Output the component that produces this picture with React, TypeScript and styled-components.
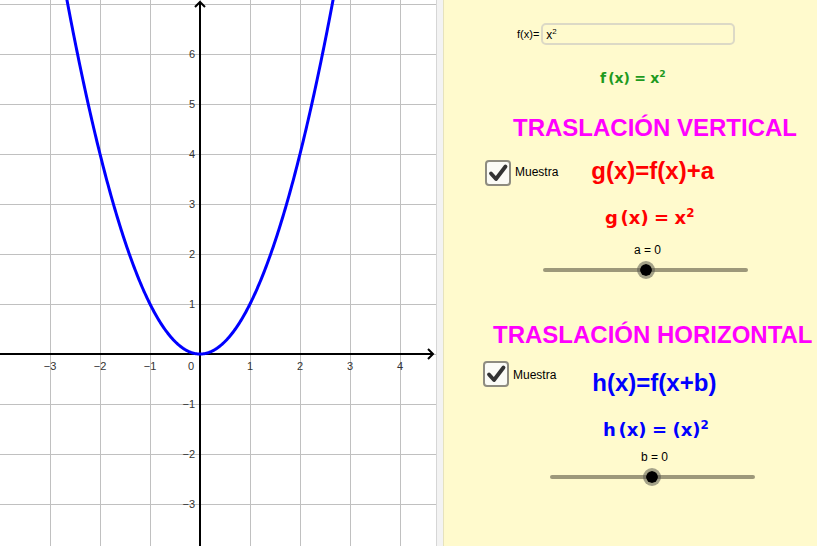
import React from 'react';
import styled, { createGlobalStyle } from 'styled-components';

const GlobalStyle = createGlobalStyle`
  html, body {
    margin: 0;
    padding: 0;
    background: #ffffff;
  }
  body {
    font-family: 'Liberation Sans', Arial, sans-serif;
  }
`;

// graph geometry
const ORIGIN_X = 200;
const ORIGIN_Y = 354;
const UNIT = 50;
const GRAPH_W = 436;
const GRAPH_H = 546;

const Page = styled.div`
  display: flex;
  width: 817px;
  height: 546px;
  overflow: hidden;
`;

const GraphPane = styled.div`
  width: ${GRAPH_W}px;
  height: ${GRAPH_H}px;
  flex-shrink: 0;
  background: #ffffff;
`;

const Divider = styled.div`
  width: 6px;
  flex-shrink: 0;
  background: #f3f3f3;
  border-left: 1px solid #d6d6d6;
`;

const Panel = styled.div`
  flex: 1;
  display: flex;
  flex-direction: column;
  background: #fffacd;
  border-left: 1px solid #e6e2bd;
`;

const Row = styled.div<{ $top: number; $h: number; $left: number }>`
  display: flex;
  align-items: center;
  margin-top: ${(p) => p.$top}px;
  height: ${(p) => p.$h}px;
  padding-left: ${(p) => p.$left}px;
`;

const CheckRow = styled.div<{ $top: number; $left: number }>`
  display: flex;
  align-items: flex-start;
  margin-top: ${(p) => p.$top}px;
  height: 26px;
  padding-left: ${(p) => p.$left}px;
`;

const InputLabel = styled.span`
  font-size: 11px;
  color: #000;
  margin-right: 2px;
`;

const InputBox = styled.div`
  box-sizing: border-box;
  width: 194px;
  height: 22px;
  border: 2px solid #dcd9c6;
  border-radius: 5px;
  padding: 2px 0 0 3px;
  font-size: 12px;
  line-height: 16px;
  color: #000;
`;

const Title = styled.h2`
  margin: 0;
  font-family: 'Liberation Sans', Arial, sans-serif;
  font-weight: bold;
  font-size: 24px;
  line-height: 30px;
  color: #ff00ff;
  white-space: nowrap;
`;

const Box = styled.div`
  box-sizing: border-box;
  width: 26px;
  height: 26px;
  border: 2px solid #8e8c80;
  border-radius: 4px;
  background: #fbfbf6;
  display: flex;
  align-items: center;
  justify-content: center;
  flex-shrink: 0;
`;

const CheckLabel = styled.span<{ $dy: number }>`
  font-size: 12px;
  line-height: 14px;
  color: #000;
  margin-left: 4px;
  margin-top: ${(p) => p.$dy}px;
`;

const BigFormula = styled.span<{ $color: string; $dy: number; $gap: number }>`
  font-family: 'Liberation Sans', Arial, sans-serif;
  font-weight: bold;
  font-size: 24px;
  line-height: 28px;
  color: ${(p) => p.$color};
  margin-left: ${(p) => p.$gap}px;
  margin-top: ${(p) => p.$dy}px;
  white-space: nowrap;
`;

const MathText = styled.span<{ $color: string; $size: number }>`
  font-family: 'DejaVu Sans', sans-serif;
  font-weight: bold;
  font-size: ${(p) => p.$size}px;
  line-height: 1;
  color: ${(p) => p.$color};
  white-space: nowrap;
  display: inline-block;
`;

const Sp = styled.span<{ $w: number }>`
  display: inline-block;
  width: ${(p) => p.$w}em;
`;

const Sup = styled.sup`
  font-size: 0.66em;
  line-height: 0;
  vertical-align: baseline;
  position: relative;
  top: -0.6em;
`;

const SliderLabel = styled.span`
  font-size: 12px;
  color: #000;
`;

const Track = styled.div<{ $w: number }>`
  position: relative;
  width: ${(p) => p.$w}px;
  height: 4px;
  border-radius: 2px;
  background: #9d987a;
`;

const Knob = styled.div`
  position: absolute;
  top: 50%;
  width: 12px;
  height: 12px;
  margin: -9px 0 0 -9px;
  border-radius: 50%;
  background: #000;
  border: 3px solid rgba(90, 90, 80, 0.55);
  background-clip: padding-box;
`;

const CheckMark = () => (
  <svg width="22" height="22" viewBox="0 0 22 22">
    <path
      d="M4 11.5 L9 17 L18.5 4.5"
      fill="none"
      stroke="#333"
      strokeWidth="3.8"
      strokeLinecap="round"
      strokeLinejoin="round"
    />
  </svg>
);

const Slider = ({ width, pos }: { width: number; pos: number }) => (
  <Track $w={width}>
    <Knob style={{ left: `${pos}px` }} />
  </Track>
);

const Graph = () => {
  const vLines: number[] = [];
  for (let x = 50; x <= 400; x += UNIT) vLines.push(x);
  const hLines: number[] = [];
  for (let y = 4; y < GRAPH_H; y += UNIT) hLines.push(y);

  const pts: string[] = [];
  for (let i = -2.7; i <= 2.7001; i += 0.02) {
    const X = ORIGIN_X + UNIT * i;
    const Y = ORIGIN_Y - UNIT * i * i;
    pts.push(`${X.toFixed(2)},${Y.toFixed(2)}`);
  }

  const xLabels = [-3, -2, -1, 1, 2, 3, 4];
  const yLabels = [-3, -2, -1, 1, 2, 3, 4, 5, 6];

  return (
    <svg width={GRAPH_W} height={GRAPH_H} viewBox={`0 0 ${GRAPH_W} ${GRAPH_H}`}>
      <g stroke="#c0c0c0" strokeWidth="1">
        {vLines.map((x) => (
          <line key={`v${x}`} x1={x + 0.5} y1={0} x2={x + 0.5} y2={GRAPH_H} />
        ))}
        {hLines.map((y) => (
          <line key={`h${y}`} x1={0} y1={y + 0.5} x2={GRAPH_W} y2={y + 0.5} />
        ))}
      </g>
      {/* axes */}
      <g stroke="#000" strokeWidth="2" fill="none">
        <line x1={0} y1={ORIGIN_Y} x2={433} y2={ORIGIN_Y} />
        <polyline points={`428,${ORIGIN_Y - 5} 433,${ORIGIN_Y} 428,${ORIGIN_Y + 5}`} />
        <line x1={ORIGIN_X} y1={GRAPH_H} x2={ORIGIN_X} y2={2} />
        <polyline points={`${ORIGIN_X - 5},7 ${ORIGIN_X},2 ${ORIGIN_X + 5},7`} />
      </g>
      <g fontFamily="'Liberation Sans', Arial, sans-serif" fontSize="11" fill="#333">
        {xLabels.map((v) => (
          <text key={`x${v}`} x={ORIGIN_X + v * UNIT} y={ORIGIN_Y + 16} textAnchor="middle">
            {v < 0 ? `\u2212${-v}` : v}
          </text>
        ))}
        <text x={ORIGIN_X - 9} y={ORIGIN_Y + 16} textAnchor="middle">0</text>
        {yLabels.map((v) => (
          <text key={`y${v}`} x={ORIGIN_X - 5} y={ORIGIN_Y - v * UNIT + 4} textAnchor="end">
            {v < 0 ? `\u2212${-v}` : v}
          </text>
        ))}
      </g>
      <polyline points={pts.join(' ')} fill="none" stroke="#0000ff" strokeWidth="3" strokeLinejoin="round" />
    </svg>
  );
};

export default function App() {
  return (
    <>
      <GlobalStyle />
      <Page>
        <GraphPane>
          <Graph />
        </GraphPane>
        <Divider />
        <Panel>
          <Row $top={23} $h={22} $left={73}>
            <InputLabel>f(x)=</InputLabel>
            <InputBox>
              x<Sup>2</Sup>
            </InputBox>
          </Row>

          <Row $top={23} $h={20} $left={156}>
            <MathText $color="#1f9a1f" $size={14}>
              f<Sp $w={0.15} />(x)<Sp $w={0.3} />=<Sp $w={0.3} />x<Sup>2</Sup>
            </MathText>
          </Row>

          <Row $top={25} $h={30} $left={69}>
            <Title>TRASLACIÓN VERTICAL</Title>
          </Row>

          <CheckRow $top={17} $left={41}>
            <Box>
              <CheckMark />
            </Box>
            <CheckLabel $dy={5}>Muestra</CheckLabel>
            <BigFormula $color="#ff0000" $dy={-3} $gap={33}>
              g(x)=f(x)+a
            </BigFormula>
          </CheckRow>

          <Row $top={20} $h={24} $left={161}>
            <MathText $color="#ff0000" $size={18}>
              g<Sp $w={0.15} />(x)<Sp $w={0.3} />=<Sp $w={0.3} />x<Sup>2</Sup>
            </MathText>
          </Row>

          <Row $top={13} $h={14} $left={190}>
            <SliderLabel>a = 0</SliderLabel>
          </Row>

          <Row $top={3} $h={20} $left={99}>
            <Slider width={205} pos={103} />
          </Row>

          <Row $top={40} $h={30} $left={49}>
            <Title>TRASLACIÓN HORIZONTAL</Title>
          </Row>

          <CheckRow $top={11} $left={39}>
            <Box>
              <CheckMark />
            </Box>
            <CheckLabel $dy={7}>Muestra</CheckLabel>
            <BigFormula $color="#0000ff" $dy={8} $gap={36}>
              h(x)=f(x+b)
            </BigFormula>
          </CheckRow>

          <Row $top={30} $h={26} $left={159}>
            <MathText $color="#0000ff" $size={18}>
              h<Sp $w={0.15} />(x)<Sp $w={0.3} />=<Sp $w={0.3} />(x)<Sup>2</Sup>
            </MathText>
          </Row>

          <Row $top={7} $h={14} $left={197}>
            <SliderLabel>b = 0</SliderLabel>
          </Row>

          <Row $top={3} $h={20} $left={106}>
            <Slider width={205} pos={102} />
          </Row>
        </Panel>
      </Page>
    </>
  );
}
